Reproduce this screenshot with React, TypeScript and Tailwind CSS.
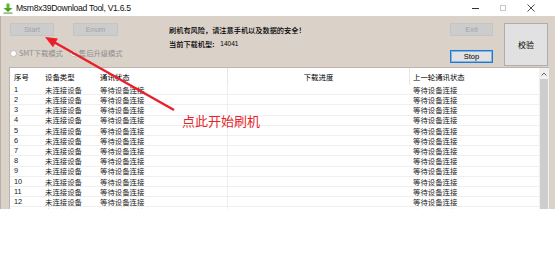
import React from "react";

const cjk = { fontFamily: '"Noto Sans CJK SC", "Noto Sans", sans-serif' };
const latin = { fontFamily: '"Liberation Sans", "Noto Sans CJK SC", sans-serif' };

const rows = Array.from({ length: 13 }, (_, i) => i + 1);

function AppIcon() {
  return (
    <svg width="10" height="11" viewBox="0 0 10 11">
      <rect x="3.5" y="0.5" width="3" height="5" fill="#5cb82e" />
      <polygon points="0.5,5 9.5,5 5,9" fill="#4aa61f" />
      <rect x="0.5" y="9.5" width="9" height="1.2" fill="#6f9f55" />
    </svg>
  );
}

function TitleBar() {
  return (
    <div className="flex items-center h-[16px] bg-white pl-[3px]">
      <AppIcon />
      <span
        className="ml-[3px] text-[8.6px] tracking-[-0.3px] text-[#111] leading-none"
        style={latin}
      >
        Msm8x39Download Tool, V1.6.5
      </span>
      <div className="ml-auto flex items-center h-full">
        <div className="w-[28px] flex justify-center">
          <div className="w-[7px] h-px bg-[#333]" />
        </div>
        <div className="w-[28px] flex justify-center">
          <div className="w-[6px] h-[6px] border border-[#c8c8c8]" />
        </div>
        <div className="w-[28px] flex justify-center">
          <svg width="8" height="8" viewBox="0 0 8 8">
            <path d="M0.5 0.5 L7.5 7.5 M7.5 0.5 L0.5 7.5" stroke="#333" strokeWidth="0.9" />
          </svg>
        </div>
        <div className="w-[10px]" />
      </div>
    </div>
  );
}

function WinButton({
  label,
  disabled,
  focused,
  className,
}: {
  label: string;
  disabled?: boolean;
  focused?: boolean;
  className: string;
}) {
  return (
    <div
      className={`flex items-center justify-center text-[7.5px] leading-none ${className} ${
        disabled
          ? "bg-[#cccccc] border border-[#c4c4c4] text-[#a3a3a3]"
          : focused
          ? "bg-[#e1e1e1] border border-[#1f7ad1] text-black shadow-[inset_0_0_0_1px_#7fb4e6]"
          : "bg-[#e1e1e1] border border-[#adadad] text-black"
      }`}
      style={latin}
    >
      {label}
    </div>
  );
}

function Radio({ label, checked }: { label: string; checked?: boolean }) {
  return (
    <div className="flex items-center gap-[2px]">
      <div className="w-[7px] h-[7px] rounded-full bg-white border border-[#bdbdbd] flex items-center justify-center">
        {checked && <div className="w-[3px] h-[3px] rounded-full bg-[#a8a8a8]" />}
      </div>
      <span className="text-[7.3px] leading-none text-[#8f8f8f]" style={cjk}>
        {label}
      </span>
    </div>
  );
}

function Controls() {
  return (
    <div className="flex h-[51px] pl-[9px] pr-[7px] pt-[7px]">
      <div className="w-[159px] flex flex-col">
        <div className="flex gap-[19px]">
          <WinButton label="Start" disabled className="w-[44px] h-[13px]" />
          <WinButton label="Enum" disabled className="w-[45px] h-[13px]" />
        </div>
        <div className="flex gap-[7px] mt-[14px]">
          <Radio label="SMT下载模式" />
          <Radio label="售后升级模式" checked />
        </div>
      </div>
      <div className="flex-1 flex flex-col">
        <div className="h-[14px] flex items-center text-[7.2px] font-medium text-black" style={cjk}>
          刷机有风险，请注意手机以及数据的安全！
        </div>
        <div className="h-[14px] flex items-center text-[7.2px] font-medium text-black" style={cjk}>
          当前下载机型:
          <span className="ml-[6px] text-[6.5px]" style={latin}>
            14041
          </span>
        </div>
      </div>
      <div className="w-[43px] flex flex-col">
        <WinButton label="Exit" disabled className="w-[43px] h-[13px]" />
        <WinButton label="Stop" focused className="w-[43px] h-[13px] mt-[14px]" />
      </div>
      <div className="ml-[11px]">
        <div
          className="w-[44px] h-[43px] bg-[#e1e1e1] border border-[#adadad] flex items-center justify-center text-[8px] text-black"
          style={cjk}
        >
          校验
        </div>
      </div>
    </div>
  );
}

const cols = "grid grid-cols-[32px_55px_131px_182px_130px]";

function Table() {
  return (
    <div className="ml-[8px] w-[540px] h-[142px] bg-white flex overflow-hidden border-t border-l border-[#bcb4ad]">
      <div className="w-[530px] flex flex-col overflow-hidden" style={cjk}>
        <div className={`${cols} h-[17px] shrink-0 items-center text-[7.4px] text-black`}>
          <div className="pl-[4px]">序号</div>
          <div className="pl-[3px]">设备类型</div>
          <div className="pl-[3px] h-full flex items-center border-r border-[#e6e6e6]">通讯状态</div>
          <div className="h-full flex items-center justify-center border-r border-[#e6e6e6]">下载进度</div>
          <div className="pl-[3px]">上一轮通讯状态</div>
        </div>
        {rows.map((n) => (
          <div
            key={n}
            className={`${cols} h-[10.2px] shrink-0 items-center text-[7.4px] leading-none text-[#1a1a1a] border-b border-[#efefef]`}
          >
            <div className="pl-[4px]" style={latin}>
              {n}
            </div>
            <div className="pl-[3px]">未连接设备</div>
            <div className="pl-[3px] h-full flex items-center border-r border-[#efefef]">等待设备连接</div>
            <div />
            <div className="pl-[3px]">等待设备连接</div>
          </div>
        ))}
      </div>
      <div className="w-[10px] bg-[#f0f0f0] flex flex-col">
        <div className="h-[11px] flex items-center justify-center">
          <svg width="6" height="4" viewBox="0 0 6 4">
            <path d="M0.5 3.5 L3 1 L5.5 3.5" stroke="#606060" strokeWidth="1" fill="none" />
          </svg>
        </div>
        <div className="flex-1 mx-[1px] bg-[#cdcdcd]" />
      </div>
    </div>
  );
}

export default function App() {
  return (
    <div className="relative w-[560px] h-[256px] bg-white overflow-hidden">
      <div className="w-[555px]">
        <TitleBar />
        <div className="h-[193px] bg-[#dad1c9] border-l border-[#b8b0a8] flex flex-col">
          <Controls />
          <Table />
        </div>
      </div>

      {/* red annotation */}
      <svg className="absolute left-0 top-0" width="560" height="256" viewBox="0 0 560 256">
        <line x1="174" y1="110" x2="53" y2="41.5" stroke="#e8202a" strokeWidth="2.4" />
        <polygon points="45,37 57.9,38.6 53,47.3" fill="#e8202a" />
      </svg>
      <div
        className="absolute left-[182px] top-[114px] text-[13px] leading-none text-[#e4262c]"
        style={cjk}
      >
        点此开始刷机
      </div>
    </div>
  );
}
